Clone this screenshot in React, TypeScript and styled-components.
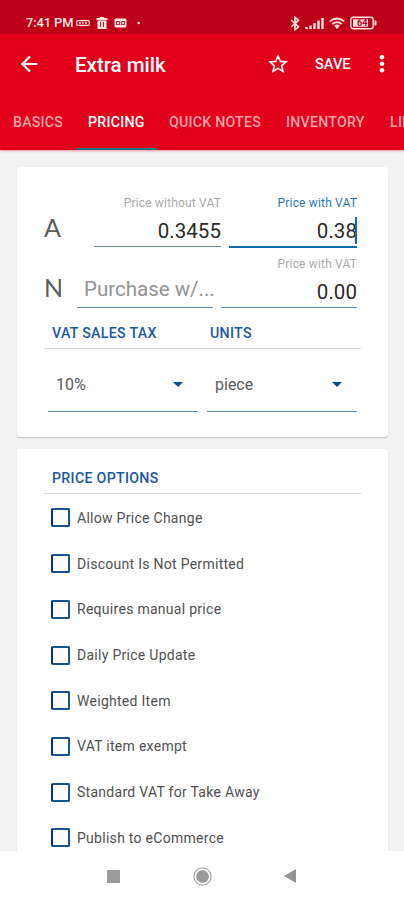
import React from "react";
import styled, { createGlobalStyle } from "styled-components";

const GlobalStyle = createGlobalStyle`
  * { box-sizing: border-box; }
  body { margin: 0; font-family: Roboto, "Liberation Sans", sans-serif; background: #f2f2f2; overflow: hidden; }
  button { border: 0; padding: 0; margin: 0; background: none; font: inherit; color: inherit; display: block; flex: none; }
  svg { display: block; flex: none; }
`;

const Screen = styled.div`
  display: flex;
  flex-direction: column;
  width: 404px;
  height: 900px;
  overflow: hidden;
  background: #f2f2f2;
`;

const StatusBar = styled.div`
  display: flex;
  align-items: center;
  flex: none;
  height: 34px;
  padding: 12px 27px 0 26px;
  background: #bd0017;
  color: #ffe3e3;
`;

const Clock = styled.span`
  width: 50px;
  font-size: 12.9px;
  font-weight: 500;
  line-height: 22px;
  letter-spacing: -0.1px;
  white-space: nowrap;
`;

const StatusGroup = styled.div<{ $end?: boolean }>`
  display: flex;
  align-items: center;
  gap: ${(p) => (p.$end ? 5 : 6)}px;
  margin-left: ${(p) => (p.$end ? "auto" : "0")};
`;

const AppBar = styled.header`
  display: flex;
  align-items: center;
  flex: none;
  height: 60px;
  padding: 0 14px 0 20px;
  background: #e3001b;
  color: #fff;
`;

const Title = styled.h1`
  margin: 0 auto 0 35px;
  font-size: 20.5px;
  font-weight: 500;
  line-height: 30px;
  padding-top: 2px;
`;

const SaveButton = styled.button`
  width: 90px;
  padding-left: 26px;
  font-size: 14.6px;
  font-weight: 500;
  text-align: left;
`;

const Tabs = styled.nav`
  display: flex;
  flex: none;
  height: 56px;
  padding-left: 1px;
  overflow: hidden;
  background: #e3001b;
  box-shadow: 0 1px 2px rgba(227, 0, 27, 0.4);
`;

const Tab = styled.button<{ $width: number; $active?: boolean }>`
  width: ${(p) => p.$width}px;
  height: 56px;
  padding: 1px 0 0 12px;
  border-bottom: 2px solid ${(p) => (p.$active ? "#23717a" : "transparent")};
  color: ${(p) => (p.$active ? "#fff" : "#f9a2a8")};
  font-size: 14.2px;
  font-weight: 500;
  line-height: 54px;
  letter-spacing: 0.22px;
  text-align: left;
  white-space: nowrap;
`;

const Content = styled.main`
  display: flex;
  flex-direction: column;
  gap: 12px;
  height: 701px;
  padding: 17px 16px 0 17px;
  overflow: hidden;
`;

const Card = styled.section<{ $height: number; $top: number }>`
  flex: none;
  height: ${(p) => p.$height}px;
  padding: ${(p) => p.$top}px 28px 0 27px;
  border-radius: 3px;
  background: #fff;
  box-shadow: 0 1px 1px rgba(0, 0, 0, 0.2);
`;

const PriceRow = styled.div<{ $height: number }>`
  display: flex;
  height: ${(p) => p.$height}px;
  padding-right: 3px;
  gap: 8px;
`;

const TierName = styled.div<{ $width: number; $top: number }>`
  width: ${(p) => p.$width}px;
  padding-top: ${(p) => p.$top}px;
  color: #5c5c5c;
  font-family: Lato, "Open Sans", sans-serif;
  font-size: 25px;
  line-height: 28px;
`;

const Field = styled.label<{ $width: number }>`
  display: flex;
  flex-direction: column;
  width: ${(p) => p.$width}px;
`;

const FieldLabel = styled.span<{ $focus?: boolean }>`
  height: 15px;
  padding-top: 1px;
  color: ${(p) => (p.$focus ? "#2a79b5" : "#a9a9a9")};
  font-size: 12px;
  line-height: 15px;
  letter-spacing: 0.17px;
  text-align: right;
  white-space: nowrap;
`;

const FieldValue = styled.span<{ $focus?: boolean; $placeholder?: boolean }>`
  display: flex;
  justify-content: ${(p) => (p.$placeholder ? "flex-start" : "flex-end")};
  align-items: center;
  height: ${(p) => (p.$focus ? 38 : 37)}px;
  padding: ${(p) => (p.$placeholder ? "1px 0 0 7px" : "7px 0 0")};
  border-bottom: ${(p) => (p.$focus ? "2px solid #0d6cad" : "1px solid #5e90b8")};
  color: ${(p) => (p.$placeholder ? "#929292" : "#2a2a2a")};
  font-size: 20.5px;
  line-height: 27px;
  letter-spacing: ${(p) => (p.$placeholder ? 0 : 0.05)}px;
  white-space: nowrap;
`;

const Caret = styled.i`
  width: 2px;
  height: 27px;
  margin: -2px 0 0 -2px;
  background: #0d6cad;
`;

const Headings = styled.div`
  display: flex;
  height: 25px;
  padding-left: 8px;
  border-bottom: 1px solid #d6d6d6;
  width: 317px;
`;

const Heading = styled.h2<{ $width?: number }>`
  width: ${(p) => (p.$width ? p.$width + "px" : "auto")};
  margin: -1px 0 0;
  color: #1c58a3;
  font-size: 14.2px;
  font-weight: 500;
  line-height: 20px;
  letter-spacing: 0.3px;
`;

const Selects = styled.div`
  display: flex;
  gap: 9px;
  padding: 11px 0 0 4px;
`;

const Select = styled.button`
  display: flex;
  align-items: center;
  justify-content: space-between;
  width: 150px;
  height: 52px;
  padding: 0 15px 2px 8px;
  border-bottom: 1.5px solid #5e90b8;
  color: #5a5a5a;
  font-size: 16px;
`;

const Options = styled.div`
  display: flex;
  flex-direction: column;
  padding: 1px 0 0 7px;
`;

const Option = styled.div`
  display: flex;
  align-items: center;
  gap: 7px;
  height: 45.72px;
  color: #505050;
  font-size: 14px;
  line-height: 20px;
  letter-spacing: 0.28px;
  white-space: nowrap;
`;

const Checkbox = styled.span`
  width: 19px;
  height: 19px;
  border: 2px solid #17548f;
  border-left-color: #0b2b80;
  border-radius: 2px;
`;

const NavBar = styled.footer`
  display: flex;
  align-items: center;
  flex: none;
  height: 49px;
  padding: 1px 0 0 107px;
  background: #fff;
`;

const NavButton = styled.button<{ $gap?: number }>`
  margin-right: ${(p) => p.$gap ?? 0}px;
`;

const Arrow = () => (
  <svg width="10" height="5" viewBox="0 0 10 5">
    <path d="M0 0H10L5 5Z" fill="#0b4a8b" />
  </svg>
);

const options = [
  "Allow Price Change",
  "Discount Is Not Permitted",
  "Requires manual price",
  "Daily Price Update",
  "Weighted Item",
  "VAT item exempt",
  "Standard VAT for Take Away",
  "Publish to eCommerce",
];

export default function App() {
  return (
    <>
      <GlobalStyle />
      <Screen>
        <StatusBar>
          <Clock>7:41 PM</Clock>
          <StatusGroup>
            <svg width="14" height="12" viewBox="0 0 14 12" fill="none" stroke="currentColor">
              <rect x=".7" y="3.7" width="12.6" height="4.6" rx="1" strokeWidth="1.2" />
              <path d="M3 6h2M6.2 6h1.6M9 6h2" strokeWidth="1.3" />
            </svg>
            <svg width="12" height="12" viewBox="0 0 12 12">
              <path d="M4 0h4v1h3.5v2H.5V1H4zM1.5 3.5h9V12h-9z" fill="currentColor" />
              <path d="M4.5 5v5M7.5 5v5" stroke="#bd0017" strokeWidth=".9" />
            </svg>
            <svg width="13" height="12" viewBox="0 0 13 12">
              <rect x=".5" y="1.5" width="12" height="9" rx="1.5" fill="currentColor" />
              <path d="M5.5 4.5h-3v3h3zM10.5 4.5h-3v3h3z" stroke="#bd0017" strokeWidth=".9" fill="none" />
            </svg>
            <svg width="12" height="12" viewBox="0 0 12 12">
              <circle cx="5.7" cy="6" r="1.3" fill="currentColor" />
            </svg>
          </StatusGroup>
          <StatusGroup $end>
            <svg width="10" height="15" viewBox="0 0 9 15" fill="none" stroke="currentColor" strokeWidth="1.6">
              <path d="M.7 4L8 10.8 4.5 13.8V1.2L8 4.2.7 11" />
            </svg>
            <svg width="19" height="13" viewBox="0 0 19 13" stroke="currentColor" strokeWidth="2.4">
              <path d="M1.5 12v-2M5.5 12V8.5M9.5 12V6M13.5 12V3.5M17.5 12V1" />
            </svg>
            <svg width="16" height="13" viewBox="0 0 16 13" fill="none" stroke="currentColor" strokeWidth="1.7">
              <path d="M.8 4.4Q8-1.4 15.2 4.4M3.3 7Q8 3.2 12.7 7" />
              <path d="M5 8.5Q8 6.3 11 8.5L8 12Z" fill="currentColor" stroke="none" />
            </svg>
            <svg width="27" height="14" viewBox="0 0 27 14">
              <rect x=".8" y="1.3" width="22.4" height="11.4" rx="2.5" fill="none" stroke="currentColor" strokeWidth="1.4" />
              <path d="M24.5 4.5h1q1 0 1 1v3q0 1-1 1h-1z" fill="currentColor" />
              <rect x="3" y="3.3" width="15" height="7.4" fill="currentColor" />
              <text x="7" y="10.4" fontSize="9" fontWeight="700" fill="#bd0017">64</text>
            </svg>
          </StatusGroup>
        </StatusBar>

        <AppBar>
          <button aria-label="Back">
            <svg width="20" height="18" viewBox="0 0 20 18" fill="none" stroke="currentColor" strokeWidth="2.2">
              <path d="M17.5 9H3M10 1.5L2.5 9L10 16.5" />
            </svg>
          </button>
          <Title>Extra milk</Title>
          <button aria-label="Favorite">
            <svg width="22" height="22" viewBox="1 1 22 22" fill="currentColor">
              <path d="M22 9.24l-7.19-.62L12 2 9.19 8.63 2 9.24l5.46 4.73L5.82 21 12 17.27 18.18 21l-1.63-7.03L22 9.24zM12 15.4l-3.76 2.27 1-4.28-3.32-2.88 4.38-.38L12 6.1l1.71 4.04 4.38.38-3.32 2.88 1 4.28L12 15.4z" />
            </svg>
          </button>
          <SaveButton>SAVE</SaveButton>
          <button aria-label="More">
            <svg width="11" height="20" viewBox="0 0 11 20" fill="currentColor">
              <circle cx="3" cy="3.2" r="2.3" />
              <circle cx="3" cy="9.7" r="2.3" />
              <circle cx="3" cy="16.2" r="2.3" />
            </svg>
          </button>
        </AppBar>

        <Tabs>
          <Tab $width={75}>BASICS</Tab>
          <Tab $width={81} $active>PRICING</Tab>
          <Tab $width={117}>QUICK NOTES</Tab>
          <Tab $width={104}>INVENTORY</Tab>
          <Tab $width={90}>LINKS</Tab>
        </Tabs>

        <Content>
          <Card $height={270} $top={28}>
            <PriceRow $height={61}>
              <TierName $width={42} $top={18}>A</TierName>
              <Field $width={127}>
                <FieldLabel>Price without VAT</FieldLabel>
                <FieldValue>0.3455</FieldValue>
              </Field>
              <Field $width={128}>
                <FieldLabel $focus>Price with VAT</FieldLabel>
                <FieldValue $focus>0.38<Caret /></FieldValue>
              </Field>
            </PriceRow>
            <PriceRow $height={68}>
              <TierName $width={25} $top={17}>N</TierName>
              <Field $width={136}>
                <FieldLabel />
                <FieldValue $placeholder>Purchase w/...</FieldValue>
              </Field>
              <Field $width={136}>
                <FieldLabel>Price with VAT</FieldLabel>
                <FieldValue>0.00</FieldValue>
              </Field>
            </PriceRow>
            <Headings>
              <Heading $width={158}>VAT SALES TAX</Heading>
              <Heading>UNITS</Heading>
            </Headings>
            <Selects>
              <Select>10%<Arrow /></Select>
              <Select>piece<Arrow /></Select>
            </Selects>
          </Card>

          <Card $height={420} $top={20}>
            <Headings>
              <Heading>PRICE OPTIONS</Heading>
            </Headings>
            <Options>
              {options.map((name) => (
                <Option key={name}><Checkbox />{name}</Option>
              ))}
            </Options>
          </Card>
        </Content>

        <NavBar>
          <NavButton $gap={73} aria-label="Recent apps">
            <svg width="13" height="13"><rect width="13" height="13" fill="#9b9b9b" /></svg>
          </NavButton>
          <NavButton $gap={72} aria-label="Home">
            <svg width="19" height="19" viewBox="0 0 19 19">
              <circle cx="9.5" cy="9.5" r="8.6" fill="none" stroke="#a3a3a3" strokeWidth="1.2" />
              <circle cx="9.5" cy="9.5" r="6.4" fill="#9b9b9b" />
            </svg>
          </NavButton>
          <NavButton aria-label="Back">
            <svg width="12" height="14" viewBox="0 0 12 14"><path d="M12 0V14L0 7Z" fill="#939393" /></svg>
          </NavButton>
        </NavBar>
      </Screen>
    </>
  );
}
